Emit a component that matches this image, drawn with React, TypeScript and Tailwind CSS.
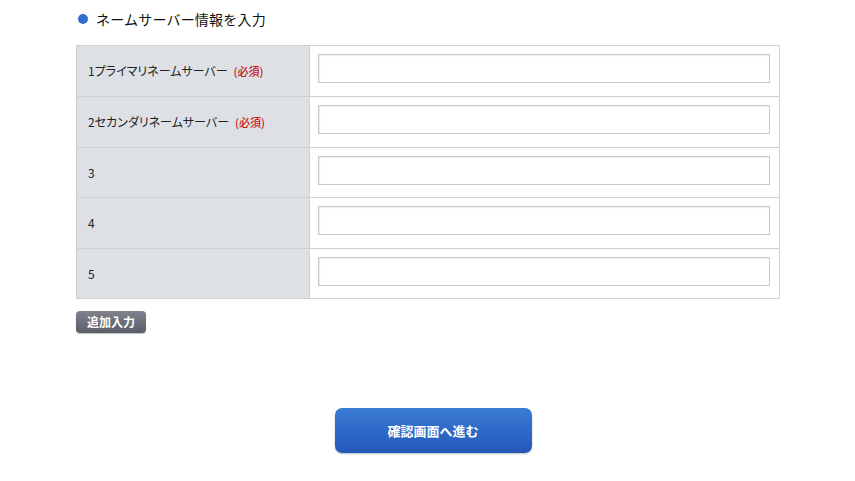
import React from "react";

const rows: { label: string; required: boolean; h: string }[] = [
  { label: "1プライマリネームサーバー", required: true, h: "h-[51px]" },
  { label: "2セカンダリネームサーバー", required: true, h: "h-[51px]" },
  { label: "3", required: false, h: "h-[50px]" },
  { label: "4", required: false, h: "h-[51px]" },
  { label: "5", required: false, h: "h-[50px]" },
];

export default function App() {
  return (
    <div
      className="w-[855px] h-[481px] bg-white text-[#333]"
      style={{ fontFamily: '"Noto Sans CJK JP", "Noto Sans", sans-serif' }}
    >
      <div className="pl-[76px] pt-[9px]">
        <div className="flex items-center h-[20px] pl-[2px]">
          <span className="w-[10px] h-[10px] rounded-full bg-[#2f6fd0]" />
          <span className="ml-[8px] text-[14px] text-[#111] tracking-[0.2px]">
            ネームサーバー情報を入力
          </span>
        </div>

        <div className="mt-[16px] w-[704px] border-t border-l border-r border-[#d0d0d0]">
          {rows.map((r) => (
            <div key={r.label} className={`flex ${r.h} border-b border-[#d0d0d0]`}>
              <div className="w-[233px] shrink-0 bg-[#dde1e6] border-r border-[#d0d0d0] flex items-center pl-[11px] text-[12px] text-[#222] [font-feature-settings:'palt']">
                <span>{r.label}</span>
                {r.required && (
                  <span className="ml-[6px] text-[11px] text-[#c8141a] font-medium">
                    (必須)
                  </span>
                )}
              </div>
              <div className="flex-1 pt-[8px] pl-[8px] pr-[9px]">
                <input
                  type="text"
                  className="block w-full h-[29px] border border-[#c8c8c8] shadow-[inset_1px_1px_1px_rgba(0,0,0,0.08)] bg-white outline-none"
                />
              </div>
            </div>
          ))}
        </div>

        <button className="mt-[12px] w-[70px] h-[22px] rounded-[4px] bg-gradient-to-b from-[#80838d] to-[#5a5e69] text-white text-[12px] font-bold shadow-[0_1px_1px_rgba(0,0,0,0.25)]">
          追加入力
        </button>
      </div>

      <div className="flex justify-center mt-[75px] pl-[11px]">
        <button className="w-[197px] h-[45px] rounded-[7px] bg-gradient-to-b from-[#3a7bd5] to-[#2458b8] text-white text-[13px] font-bold shadow-[0_1px_2px_rgba(0,0,0,0.25)]">
          確認画面へ進む
        </button>
      </div>
    </div>
  );
}
